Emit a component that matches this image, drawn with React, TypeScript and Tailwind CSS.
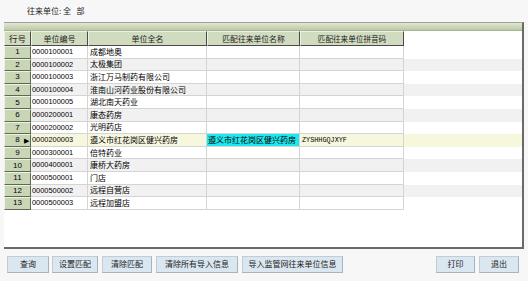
import React from "react";

const rows = [
  ["1", "0000100001", "成都地奥", "", ""],
  ["2", "0000100002", "太极集团", "", ""],
  ["3", "0000100003", "浙江万马制药有限公司", "", ""],
  ["4", "0000100004", "淮南山河药业股份有限公司", "", ""],
  ["5", "0000100005", "湖北南天药业", "", ""],
  ["6", "0000200001", "康态药房", "", ""],
  ["7", "0000200002", "光明药店", "", ""],
  ["8", "0000200003", "遵义市红花岗区健兴药房", "遵义市红花岗区健兴药房", "ZYSHHGQJXYF"],
  ["9", "0000300001", "倍特药业", "", ""],
  ["10", "0000400001", "康桥大药房", "", ""],
  ["11", "0000500001", "门店", "", ""],
  ["12", "0000500002", "远程自营店", "", ""],
  ["13", "0000500003", "远程加盟店", "", ""],
];

const cjk = { fontFamily: '"Noto Sans CJK SC","Liberation Sans",sans-serif' };
const num = { fontFamily: '"Liberation Sans",sans-serif' };
const mono = { fontFamily: '"Liberation Mono",monospace' };

export default function App() {
  return (
    <div className="w-[528px] h-[281px] bg-[#f7f7f7] text-[8px] text-black overflow-hidden flex flex-col" style={cjk}>
      <div className="h-[22px] pl-[27px] pt-[6px] leading-[10px] text-[8px] text-[#222]">往来单位:&nbsp;全&nbsp;&nbsp;&nbsp;部</div>
      <div className="ml-[4px] w-[520px] h-[227px] border-t border-[#a0a0a0] border-r-2 border-r-[#6a6a6a] border-b-2 border-b-[#6a6a6a] bg-white flex flex-col">
        <div className="h-[8px] bg-gradient-to-b from-[#dfe7d2] to-[#bccaa6] border-b border-[#a8b494]" />
        <div className="flex h-[15px]">
          {[
            ["行号", "w-[27px]", "text-[8.5px]"],
            ["单位编号", "w-[57px]", "text-[8px]"],
            ["单位全名", "w-[119px]", "text-[8px]"],
            ["匹配往来单位名称", "w-[93px]", "text-[7.8px]"],
            ["匹配往来单位拼音码", "w-[104px]", "text-[7.6px]"],
          ].map(([t, w, s]) => (
            <div
              key={t}
              className={`${w} ${s} h-[15px] bg-[#d0dbbf] border-r border-b border-[#4a4a4a] border-t border-t-[#eef2e6] border-l border-l-[#eef2e6] flex items-center justify-center leading-none text-[#222] whitespace-nowrap`}
            >
              {t}
            </div>
          ))}
        </div>
        {rows.map((r, i) => {
          const sel = r[0] === "8";
          const bg = sel ? "bg-[#f7f7de]" : i % 2 === 1 ? "bg-[#f1f1f1]" : "bg-white";
          return (
            <div key={r[0]} className={`flex h-[12.6px] ${bg}`}>
              <div
                className="w-[27px] bg-[#c9d6b6] border-r border-b border-[#5e6a50] border-t border-t-[#eef2e6] border-l border-l-[#eef2e6] flex items-center justify-center leading-none relative text-[8px]"
                style={num}
              >
                {r[0]}
                {sel && <span className="absolute right-[1px] text-[7px] leading-none">▶</span>}
              </div>
              <div className="w-[57px] border-r border-b border-[#d4d4d4] pl-[1px] flex items-center leading-none text-[7.4px] whitespace-nowrap" style={num}>
                {r[1]}
              </div>
              <div className="w-[119px] border-r border-b border-[#d4d4d4] pl-[2px] flex items-center leading-none whitespace-nowrap text-[8px]">
                {r[2]}
              </div>
              <div className={`w-[93px] border-r border-b border-[#d4d4d4] flex items-center leading-none whitespace-nowrap text-[8px] ${sel ? "bg-[#1ee8ee]" : ""}`}>
                {r[3] && <span className="pl-[1px]">{r[3]}</span>}
              </div>
              <div className="w-[104px] border-r border-b border-[#d4d4d4] pl-[2px] flex items-center leading-none text-[6.8px]" style={mono}>
                {r[4]}
              </div>
            </div>
          );
        })}
      </div>
      <div className="flex items-center h-[30px] pl-[7px] pr-[9px]">
        {[
          ["查询", "w-[42px]", "mr-[3px]"],
          ["设置匹配", "w-[46px]", "mr-[4px]"],
          ["清除匹配", "w-[50px]", "mr-[4px]"],
          ["清除所有导入信息", "w-[82px]", "mr-[4px]"],
          ["导入监管网往来单位信息", "w-[101px]", "mr-auto"],
          ["打印", "w-[39px]", "mr-[4px]"],
          ["退出", "w-[40px]", ""],
        ].map(([t, w, m]) => (
          <div
            key={t}
            className={`${w} ${m} h-[17px] bg-[#dbe7f0] border border-[#c2ccd4] border-b-[#a9b3bb] border-r-[#a9b3bb] flex items-center justify-center leading-none text-[8px] text-[#222] whitespace-nowrap`}
          >
            {t}
          </div>
        ))}
      </div>
    </div>
  );
}
